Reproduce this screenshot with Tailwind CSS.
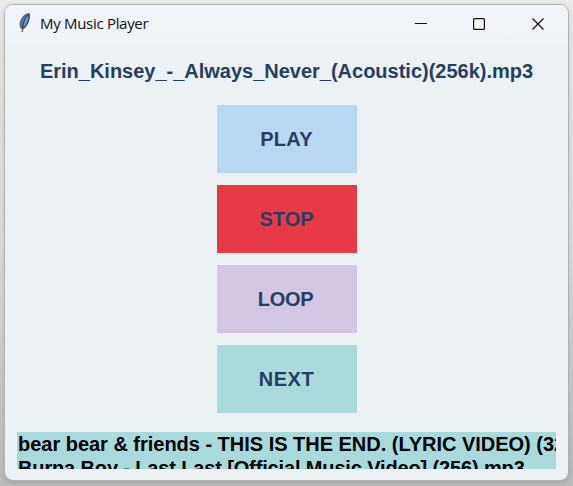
<!DOCTYPE html>
<html lang="en">
<head>
<meta charset="utf-8">
<title>My Music Player</title>
<script src="https://cdn.jsdelivr.net/npm/@tailwindcss/browser@4"></script>
</head>
<body class="w-[573px] h-[486px] overflow-hidden bg-linear-to-b from-[#ebebea] via-[#dedede] to-[#bcbcbc] pl-1 pt-1">
<main class="w-[565px] h-[477px] rounded-[9px] border border-[#b0b1b3] bg-[#ecf2f4] overflow-hidden flex flex-col shadow-[0_2px_6px_rgba(0,0,0,0.15)]">
  <header class="h-[39px] shrink-0 flex items-start bg-linear-to-b from-[#f0f3f8] from-70% to-[#ecf2f4]">
    <svg class="w-[14px] h-[22px] ml-[13px] mt-[7px]" viewBox="0 0 14 22" fill="none">
      <path d="M10.500 1C6.500 2 2.500 6 1.500 11.500L2 15.500L5 17.500C9.500 14.500 12 8 11.700 1.500Z" fill="#4a5f77"/>
      <path d="M10.300 3.500C8 5 5.500 9.500 5.300 15.500C9 13 11 8 10.300 3.500Z" fill="#6797d4"/>
      <path d="M7.500 4.500C5 7 3.300 10 3 14" stroke="#5d86b8" stroke-width="1.300"/>
      <path d="M11.400 2.500C11.500 8 9.500 13 5 17" stroke="#24384f"/>
      <path d="M9.500 3.500C6.500 7 5 11 4.500 17" stroke="#26405f" stroke-width="0.800"/>
      <path d="M4.500 16L4.300 20" stroke="#856a50" stroke-width="1.500"/>
    </svg>
    <h1 class="ml-[8px] mt-[6px] text-[15px] leading-[24px] tracking-[-0.3px] whitespace-nowrap text-[#111] font-['Open_Sans',sans-serif]">My Music Player</h1>
    <svg class="ml-auto mr-[22px] mt-[12px] w-[132px] h-[14px]" viewBox="0 0 132 14" fill="none" stroke="#111" stroke-width="1.200">
      <path d="M1 6.500H13"/>
      <rect x="59.600" y="1.600" width="10.800" height="10.800" rx="1"/>
      <path d="M118.500 1.500L129.500 12.500M129.500 1.500L118.500 12.500"/>
    </svg>
  </header>
  <section class="flex flex-col items-center pt-[15px] font-['Liberation_Sans',Arial,sans-serif] font-bold text-[20px] text-[#263e62]">
    <p class="h-[24px] leading-[24px] tracking-[-0.01px] whitespace-nowrap">Erin_Kinsey_-_Always_Never_(Acoustic)(256k).mp3</p>
    <div class="mt-[22px] flex flex-col gap-[12px]">
      <button class="w-[140px] h-[68px] bg-[#b8d8f1] tracking-[0.3px]">PLAY</button>
      <button class="w-[140px] h-[68px] bg-[#e63a46]">STOP</button>
      <button class="w-[140px] h-[68px] bg-[#d3c6e0] tracking-[-0.3px] pr-[2px]">LOOP</button>
      <button class="w-[140px] h-[68px] bg-[#a8dadb] tracking-[0.5px]">NEXT</button>
    </div>
    <ul class="mt-[19px] w-[539px] h-[37px] overflow-hidden bg-[#a8dadb] text-black leading-[24px] whitespace-nowrap">
      <li class="pl-px tracking-[-0.02px]">bear bear &amp; friends - THIS IS THE END. (LYRIC VIDEO) (320).mp3</li>
      <li class="pl-px tracking-[-0.14px]">Burna Boy - Last Last [Official Music Video] (256).mp3</li>
    </ul>
  </section>
</main>
</body>
</html>
